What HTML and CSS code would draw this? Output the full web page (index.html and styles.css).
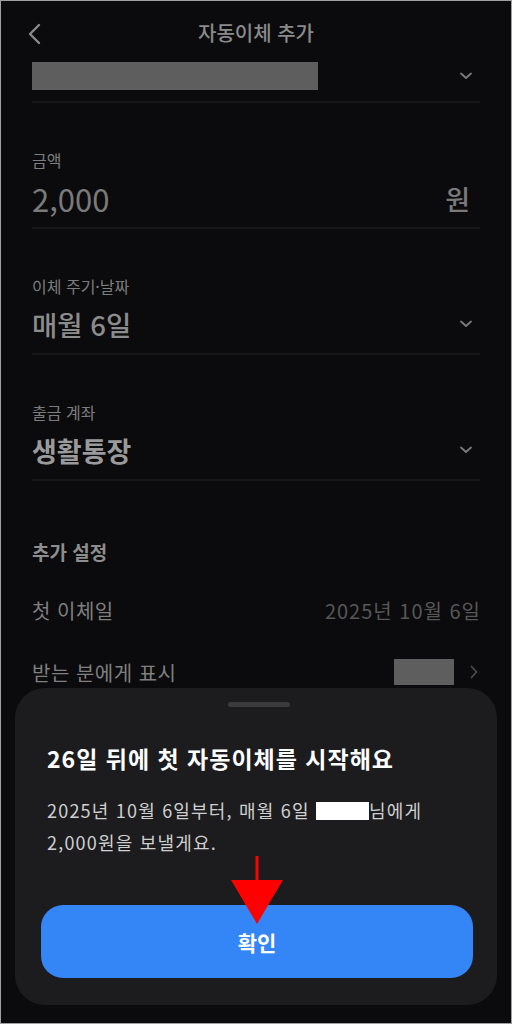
FILE: index.html
```html
<!DOCTYPE html>
<html lang="ko">
<head>
    <meta charset="UTF-8">
    <meta name="viewport" content="width=device-width, initial-scale=1.0">
    <title>자동이체 추가</title>
    <link rel="stylesheet" href="styles.css">
</head>
<body>
    <div class="screen">
        <header class="top-bar">
            <svg class="back" width="14" height="22" viewBox="0 0 14 22">
                <path d="M12 2 L3 11 L12 20" fill="none" stroke="#8a8a8a" stroke-width="2.4" stroke-linecap="round" stroke-linejoin="round"/>
            </svg>
            <h1>자동이체 추가</h1>
        </header>

        <div class="field first">
            <div class="field-row">
                <span class="mask"></span>
                <svg class="chev" width="12" height="8" viewBox="0 0 12 8"><path d="M1 1.5 L6 6 L11 1.5" fill="none" stroke="#7a7a7a" stroke-width="1.8" stroke-linecap="round" stroke-linejoin="round"/></svg>
            </div>
        </div>

        <div class="field">
            <label>금액</label>
            <div class="field-row">
                <span class="value amount">2,000</span>
                <span class="unit">원</span>
            </div>
        </div>

        <div class="field">
            <label>이체 주기·날짜</label>
            <div class="field-row">
                <span class="value">매월 6일</span>
                <svg class="chev" width="12" height="8" viewBox="0 0 12 8"><path d="M1 1.5 L6 6 L11 1.5" fill="none" stroke="#7a7a7a" stroke-width="1.8" stroke-linecap="round" stroke-linejoin="round"/></svg>
            </div>
        </div>

        <div class="field">
            <label>출금 계좌</label>
            <div class="field-row">
                <span class="value strong">생활통장</span>
                <svg class="chev" width="12" height="8" viewBox="0 0 12 8"><path d="M1 1.5 L6 6 L11 1.5" fill="none" stroke="#7a7a7a" stroke-width="1.8" stroke-linecap="round" stroke-linejoin="round"/></svg>
            </div>
        </div>

        <section class="extra">
            <h2>추가 설정</h2>
            <div class="extra-row">
                <span>첫 이체일</span>
                <span class="date">2025년 10월 6일</span>
            </div>
            <div class="extra-row">
                <span>받는 분에게 표시</span>
                <span class="right">
                    <span class="mask small"></span>
                    <svg width="8" height="14" viewBox="0 0 8 14"><path d="M1.5 1.5 L6.5 7 L1.5 12.5" fill="none" stroke="#4a4a4a" stroke-width="1.8" stroke-linecap="round" stroke-linejoin="round"/></svg>
                </span>
            </div>
        </section>

        <div class="sheet">
            <div class="handle"></div>
            <h3>26일 뒤에 첫 자동이체를 시작해요</h3>
            <p>2025년 10월 6일부터, 매월 6일 <span class="name-mask"></span>님에게<br>2,000원을 보낼게요.</p>
            <button class="confirm">확인</button>
            <!-- 안내용 화살표 -->
            <svg class="pointer" width="56" height="70" viewBox="0 0 56 70">
                <path d="M28 0 L28 26" stroke="#f00" stroke-width="3"/>
                <path d="M2 24 L54 24 L28 68 Z" fill="#f00"/>
            </svg>
        </div>
    </div>
</body>
</html>
```

FILE: styles.css
```css
* {
    margin: 0;
    padding: 0;
    box-sizing: border-box;
}
body {
    background-color: #0b0b0d;
    font-family: "Noto Sans CJK KR", "Noto Sans", sans-serif;
}
.screen {
    position: relative;
    width: 512px;
    height: 1024px;
    border: 1px solid #a0a0a0;
    background-color: #0b0b0d;
    padding: 0 31px;
    overflow: hidden;
}
.top-bar {
    position: relative;
    height: 60px;
    display: flex;
    align-items: center;
    justify-content: center;
}
.top-bar .back {
    position: absolute;
    left: -5px;
    top: 22px;
}
.top-bar h1 {
    font-size: 20px;
    font-weight: 500;
    color: #8a8a8a;
    margin-top: 2px;
}
.field {
    border-bottom: 2px solid #17171a;
    padding-top: 47px;
    padding-bottom: 9px;
}
.field.first {
    padding-top: 0;
    padding-bottom: 10px;
}
.field label {
    display: block;
    font-size: 16px;
    color: #7d7d7d;
    line-height: 20px;
    margin-bottom: 8px;
}
.field-row {
    display: flex;
    align-items: center;
    justify-content: space-between;
    height: 40px;
}
.field.first .field-row {
    height: 30px;
}
.mask {
    display: block;
    width: 286px;
    height: 28px;
    background-color: #5e5e5e;
}
.mask.small {
    width: 60px;
    height: 26px;
}
.chev {
    margin-right: 8px;
}
.value {
    font-size: 27.5px;
    color: #8c8c8c;
    font-weight: 500;
}
.value.amount {
    font-size: 31px;
    font-weight: 400;
    color: #7a7a7a;
}
.value.strong {
    font-size: 27px;
    font-weight: 700;
    color: #9a9a9a;
}
.unit {
    font-size: 27px;
    font-weight: 500;
    color: #7a7a7a;
    margin-right: 10px;
}
.extra {
    padding-top: 51px;
}
.extra h2 {
    font-size: 19px;
    font-weight: 700;
    color: #8e8e8e;
    line-height: 40px;
    margin-bottom: 7px;
}
.extra-row {
    display: flex;
    justify-content: space-between;
    align-items: center;
    height: 62px;
    font-size: 20px;
    letter-spacing: 0.5px;
    color: #7f7f7f;
}
.extra-row .date {
    color: #575757;
    letter-spacing: 1px;
    margin-right: -1px;
}
.extra-row .right {
    display: flex;
    align-items: center;
    gap: 16px;
    margin-right: 2px;
}
.sheet {
    position: absolute;
    left: 14px;
    right: 14px;
    top: 687px;
    height: 317px;
    background-color: #1c1c1f;
    border-radius: 30px;
    padding: 14px 26px 0 32px;
}
.handle {
    width: 62px;
    height: 5px;
    border-radius: 3px;
    background-color: #3b3b3e;
    margin: 0 auto;
}
.sheet h3 {
    margin-top: 34px;
    font-size: 23px;
    font-weight: 700;
    letter-spacing: 1px;
    color: #ffffff;
    line-height: 34px;
}
.sheet p {
    margin-top: 19px;
    font-size: 18px;
    letter-spacing: 1.2px;
    line-height: 32px;
    color: #cfcfcf;
}
.name-mask {
    display: inline-block;
    width: 53px;
    height: 18px;
    background-color: #ffffff;
    vertical-align: -2px;
}
.confirm {
    display: block;
    margin-top: 47px;
    margin-left: -6px;
    width: 432px;
    height: 73px;
    border: none;
    border-radius: 22px;
    background-color: #3485f6;
    color: #ffffff;
    font-family: inherit;
    font-size: 21px;
    font-weight: 700;
}
.pointer {
    position: absolute;
    left: 214px;
    top: 168px;
}
```
